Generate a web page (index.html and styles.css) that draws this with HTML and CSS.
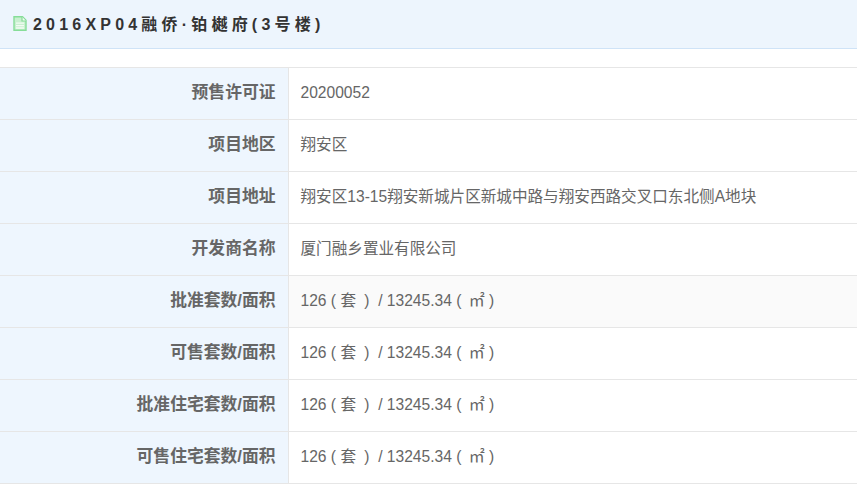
FILE: index.html
```html
<!DOCTYPE html>
<html lang="zh">
<head>
<meta charset="utf-8">
<title>2016XP04融侨·铂樾府(3号楼)</title>
<link rel="stylesheet" href="styles.css">
</head>
<body>
<header class="title-bar">
  <svg class="doc-icon" width="14" height="15" viewBox="0 0 14 15">
    <path d="M1 .8H9.5L13 4.3V14.2H1Z" fill="#c9f0d0" stroke="#86dd98" stroke-width="1.4"/>
    <path d="M9 .8V5H13" fill="#f0faf2" stroke="#86dd98" stroke-width="1.2"/>
    <path d="M3 7.2H11M3 9.6H11M3 12H11" stroke="#f2fbf4" stroke-width="1.3"/>
  </svg>
  <h1 class="title">2016XP04融侨·铂樾府(3号楼)</h1>
</header>
<table class="info">
  <tr><th>预售许可证</th><td>20200052</td></tr>
  <tr><th>项目地区</th><td>翔安区</td></tr>
  <tr><th>项目地址</th><td>翔安区13-15翔安新城片区新城中路与翔安西路交叉口东北侧A地块</td></tr>
  <tr><th>开发商名称</th><td>厦门融乡置业有限公司</td></tr>
  <tr class="hover"><th>批准套数/面积</th><td>126 ( <span class="unit">套</span> ) &nbsp;/ 13245.34 ( <span class="area">㎡</span> )</td></tr>
  <tr><th>可售套数/面积</th><td>126 ( <span class="unit">套</span> ) &nbsp;/ 13245.34 ( <span class="area">㎡</span> )</td></tr>
  <tr><th>批准住宅套数/面积</th><td>126 ( <span class="unit">套</span> ) &nbsp;/ 13245.34 ( <span class="area">㎡</span> )</td></tr>
  <tr><th>可售住宅套数/面积</th><td>126 ( <span class="unit">套</span> ) &nbsp;/ 13245.34 ( <span class="area">㎡</span> )</td></tr>
</table>
</body>
</html>
```
FILE: styles.css
```css
* { box-sizing: border-box; }
html, body { margin: 0; padding: 0; background: #fff; overflow: hidden; }
body { font-family: "Liberation Sans", "Noto Sans CJK SC", sans-serif; color: #666; }
.title-bar {
  height: 49px;
  background: #edf5fd;
  border-bottom: 1px solid #cfe3f7;
  display: flex;
  align-items: center;
  padding-left: 13px;
  gap: 6px;
  margin-bottom: 18px;
}
.doc-icon { flex: none; margin-top: -2px; }
.title {
  margin: 0 0 2px;
  font-size: 16px;
  font-weight: bold;
  letter-spacing: 4.2px;
  color: #333;
  white-space: nowrap;
}
.info { width: 100%; border-collapse: collapse; table-layout: fixed; }
.info tr { height: 52px; }
.info th, .info td { border: 1px solid #e6e6e6; border-left: 0; border-right: 0; padding: 0 0 2px; line-height: 20px; }
.info th {
  width: 288px;
  background: #eef6fe;
  border-right: 1px solid #e6e6e6;
  text-align: right;
  padding-right: 12px;
  font-size: 16.8px;
  font-weight: bold;
  color: #666;
}
.info td { padding-left: 12px; font-size: 15.6px; color: #666; }
.unit { padding-right: 4px; }
.area { padding-left: 3px; font-size: 16px; }
.hover td { background: #fafafa; }
```
